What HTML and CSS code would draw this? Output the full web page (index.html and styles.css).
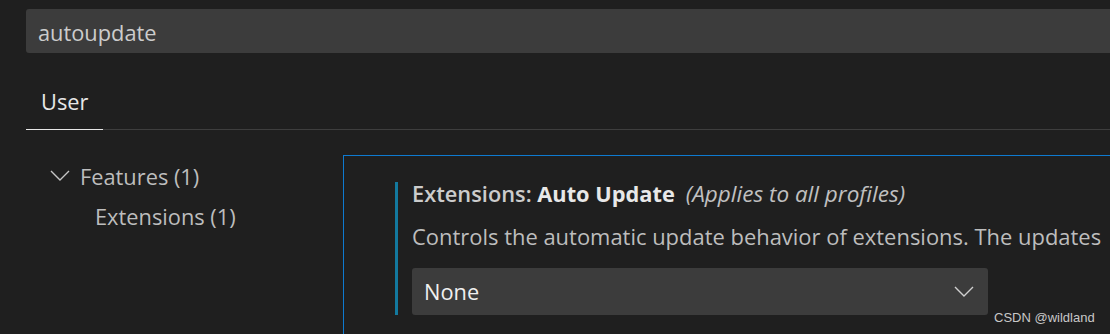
FILE: index.html
```html
<!DOCTYPE html>
<html>
<head>
<meta charset="utf-8">
<link rel="stylesheet" href="styles.css">
</head>
<body>
<div class="page">
  <div class="search">autoupdate</div>
  <div class="tabs">
    <div class="tab active">User</div>
  </div>
  <div class="main">
    <div class="tree">
      <div class="tree-row">
        <svg class="chev" width="20" height="11" viewBox="0 0 20 11"><path d="M1 1 L10 10 L19 1" fill="none" stroke="#c5c5c5" stroke-width="1.4"/></svg>
        <span>Features (1)</span>
      </div>
      <div class="tree-row child">Extensions (1)</div>
    </div>
    <div class="panel">
      <div class="setting">
        <div class="title"><span class="cat">Extensions: </span><span class="label">Auto Update</span><span class="scope">(Applies to all profiles)</span></div>
        <div class="desc">Controls the automatic update behavior of extensions. The updates</div>
        <div class="select">
          <span>None</span>
          <svg class="sel-chev" width="20" height="11" viewBox="0 0 20 11"><path d="M1 1 L10 10 L19 1" fill="none" stroke="#d0d0d0" stroke-width="1.4"/></svg>
        </div>
      </div>
    </div>
  </div>
  <div class="watermark">CSDN @wildland</div>
</div>
</body>
</html>
```
FILE: styles.css
```css
html, body {
  margin: 0;
  padding: 0;
  background: #1f1f1f;
  overflow: hidden;
}
.page {
  position: relative;
  width: 1110px;
  height: 334px;
  overflow: hidden;
  font-family: "Open Sans", "Noto Sans", sans-serif;
  font-size: 21.8px;
  color: #cccccc;
}
.search {
  margin: 9px -20px 0 26px;
  height: 44px;
  background: #3c3c3c;
  border-radius: 3px;
  box-sizing: border-box;
  padding: 3px 0 0 12px;
  line-height: 41px;
  color: #cccccc;
}
.tabs {
  display: flex;
  margin: 0 0 0 26px;
  padding-top: 31px;
  border-bottom: 1px solid #3e3e3e;
}
.tab {
  padding: 0 15px 9px;
  line-height: 36px;
  color: #e7e7e7;
  border-bottom: 1px solid #e7e7e7;
  margin-bottom: -1px;
}
.main {
  display: flex;
  padding-top: 25px;
}
.tree {
  flex: 0 0 343px;
  padding-top: 1px;
  color: #bdbdbd;
}
.tree-row {
  display: flex;
  align-items: center;
  height: 40px;
  padding-left: 50px;
  gap: 10px;
}
.tree-row.child {
  padding-left: 95px;
}
.chev {
  display: block;
  margin-top: -2px;
}
.panel {
  flex: 1;
  min-width: 0;
  border-top: 1px solid #0e7ad0;
  border-left: 1px solid #0e7ad0;
  height: 200px;
  padding: 26px 0 0 51px;
}
.setting {
  border-left: 3px solid #13799e;
  padding-left: 14px;
}
.title {
  line-height: 24px;
  height: 24px;
  white-space: nowrap;
  color: #cccccc;
  font-weight: 600;
}
.title .label {
  color: #e8e8e8;
  font-weight: 700;
}
.title .scope {
  font-style: italic;
  font-weight: 400;
  color: #c0c0c0;
  margin-left: 11px;
  font-size: 22.5px;
}
.desc {
  line-height: 28px;
  margin-top: 17px;
  white-space: nowrap;
  color: #bdbdbd;
  font-size: 21.95px;
}
.select {
  margin-top: 17px;
  width: 576px;
  height: 47px;
  background: #3c3c3c;
  border-radius: 3px;
  display: flex;
  align-items: center;
  justify-content: space-between;
  box-sizing: border-box;
  padding: 0 14px 0 12px;
  color: #f0f0f0;
}
.sel-chev {
  display: block;
}
.watermark {
  position: absolute;
  left: 994px;
  top: 310px;
  font-family: "Liberation Sans", Arial, sans-serif;
  font-size: 13px;
  color: #c8c8c8;
}
```
